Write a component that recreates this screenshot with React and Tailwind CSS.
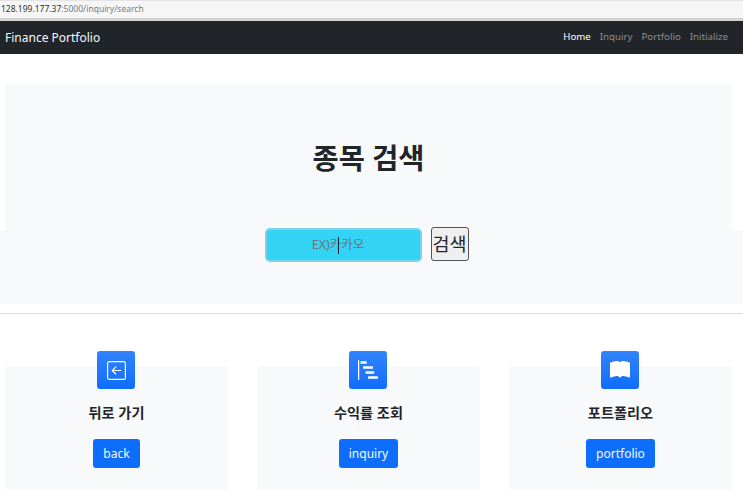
import React from 'react';
import { BsArrowLeftSquare, BsBarChartSteps, BsBookFill } from 'react-icons/bs';

const FONT = "font-['Noto_Sans','Noto_Sans_CJK_KR',sans-serif]";

const NAV_LINKS = [
  { label: 'Home', active: true },
  { label: 'Inquiry' },
  { label: 'Portfolio' },
  { label: 'Initialize' },
];

const CARDS = [
  { title: '뒤로 가기', button: 'back', icon: BsArrowLeftSquare, size: 'text-[19px]' },
  { title: '수익률 조회', button: 'inquiry', icon: BsBarChartSteps, size: 'text-[20px]' },
  { title: '포트폴리오', button: 'portfolio', icon: BsBookFill, size: 'text-[20px]' },
];

export default function App() {
  return (
    <div className={`${FONT} h-[490px] w-[743px] overflow-hidden bg-white text-[#212529]`}>
      {/* Browser address bar */}
      <div className="h-[21px] border-b-[3px] border-[#d4d4d4] bg-[#f6f6f6] border-t border-t-[#e4e4e4]">
        <p className="pl-px text-[8.5px] leading-[15px] text-[#7a7a7a]">
          <span className="text-[#333]">128.199.177.37</span>:5000/inquiry/search
        </p>
      </div>

      {/* Navbar */}
      <nav className="flex h-[33px] items-center justify-between bg-[#212529] pl-[5px] pr-[15px]">
        <span className="text-[12px] text-[#f8f9fa]">Finance Portfolio</span>
        <ul className="flex gap-[9px] text-[9.7px]">
          {NAV_LINKS.map(link => (
            <li key={link.label} className={link.active ? 'text-white' : 'text-[#8b8e91]'}>
              {link.label}
            </li>
          ))}
        </ul>
      </nav>

      {/* Search */}
      <section className="pt-[29px]">
        <div className="mx-[5px] h-[147px] w-[727px] rounded-t-[4px] bg-[#f8f9fa] pt-[52px] text-center">
          <h1 className="text-[28.4px] font-bold leading-[46px]">종목 검색</h1>
        </div>
        <div className="flex h-[74px] items-start justify-center gap-[9px] bg-[#f8f9fa] pr-[10px]">
          <div className="relative -mt-[2px] flex h-[34px] w-[157px] items-center justify-center rounded-[5px] border-2 border-[#7ed3ea] bg-[#32d3f5] pr-[10px] text-[12.5px] text-[#6c757d]">
            EX)카카오
            <span className="absolute left-[71px] top-[7px] h-[17px] w-px bg-[#212529]" />
          </div>
          <button className="-mt-[3px] h-[34px] w-[38px] whitespace-nowrap rounded-[3px] border border-[#555] bg-[#efefef] p-0 text-[18.5px] leading-none text-[#212529]">
            검색
          </button>
        </div>
      </section>

      <hr className="mt-[9px] border-t border-[#d9d9d9]" />

      {/* Feature cards */}
      <section className="mt-[52px] grid grid-cols-3 gap-[29px] pl-[5px] pr-[11px]">
        {CARDS.map(card => {
          const Icon = card.icon;
          return (
            <div key={card.button} className="h-[124px] rounded-[2px] bg-[#f8f9fa] text-center">
              <div className="-mt-[15px] ml-[92px] flex h-[38px] w-[38px] items-center justify-center rounded-[3px] bg-gradient-to-b from-[#3183fd] to-[#0d6efd] text-white">
                <Icon className={card.size} />
              </div>
              <h3 className="mt-[12px] text-[14.2px] font-bold leading-[24px]">{card.title}</h3>
              <button className="mt-[14px] h-[29px] rounded-[3px] bg-[#0d6efd] px-[10px] text-[12px] text-[#f8f9fa]">
                {card.button}
              </button>
            </div>
          );
        })}
      </section>
    </div>
  );
}
